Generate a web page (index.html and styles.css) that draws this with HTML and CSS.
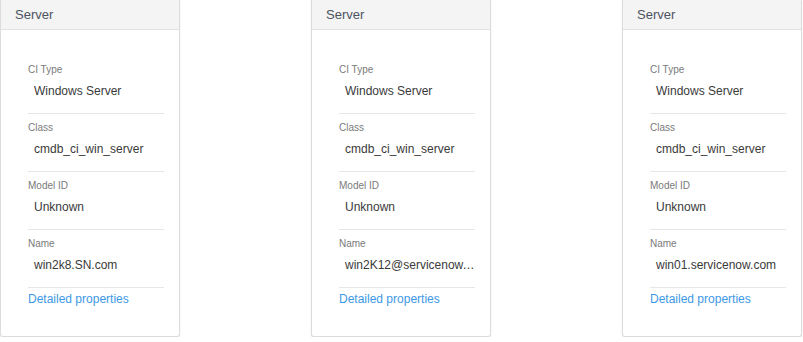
FILE: index.html
```html
<!DOCTYPE html>
<html lang="en">
    <head>
        <meta charset="UTF-8">
        <meta name="viewport" content="width=device-width, initial-scale=1.0">
        <title>CI Cards</title>
        <link rel="stylesheet" href="styles.css">
    </head>
    <body>

        <div class="card-row">
            <!-- Server 1 -->
            <div class="card">
                <div class="card-header">Server</div>
                <div class="card-body">
                    <div class="field">
                        <div class="field-label">CI Type</div>
                        <div class="field-value">Windows Server</div>
                    </div>
                    <div class="field">
                        <div class="field-label">Class</div>
                        <div class="field-value">cmdb_ci_win_server</div>
                    </div>
                    <div class="field">
                        <div class="field-label">Model ID</div>
                        <div class="field-value">Unknown</div>
                    </div>
                    <div class="field">
                        <div class="field-label">Name</div>
                        <div class="field-value">win2k8.SN.com</div>
                    </div>
                    <a class="details-link" href="#">Detailed properties</a>
                </div>
            </div>

            <!-- Server 2 -->
            <div class="card">
                <div class="card-header">Server</div>
                <div class="card-body">
                    <div class="field">
                        <div class="field-label">CI Type</div>
                        <div class="field-value">Windows Server</div>
                    </div>
                    <div class="field">
                        <div class="field-label">Class</div>
                        <div class="field-value">cmdb_ci_win_server</div>
                    </div>
                    <div class="field">
                        <div class="field-label">Model ID</div>
                        <div class="field-value">Unknown</div>
                    </div>
                    <div class="field">
                        <div class="field-label">Name</div>
                        <div class="field-value" title="win2K12@servicenow.com">win2K12@servicenow.com</div>
                    </div>
                    <a class="details-link" href="#">Detailed properties</a>
                </div>
            </div>

            <!-- Server 3 -->
            <div class="card">
                <div class="card-header">Server</div>
                <div class="card-body">
                    <div class="field">
                        <div class="field-label">CI Type</div>
                        <div class="field-value">Windows Server</div>
                    </div>
                    <div class="field">
                        <div class="field-label">Class</div>
                        <div class="field-value">cmdb_ci_win_server</div>
                    </div>
                    <div class="field">
                        <div class="field-label">Model ID</div>
                        <div class="field-value">Unknown</div>
                    </div>
                    <div class="field">
                        <div class="field-label">Name</div>
                        <div class="field-value">win01.servicenow.com</div>
                    </div>
                    <a class="details-link" href="#">Detailed properties</a>
                </div>
            </div>
        </div>

    </body>
</html>
```

FILE: styles.css
```css
/* Page */
body {
  margin: 0;
  background-color: #ffffff;
  font-family: "Liberation Sans", Arial, sans-serif;
}

/* Row of cards */
.card-row {
  display: flex;
  gap: 131px;
  align-items: flex-start;
}

/* Card Container */
.card {
  width: 180px;
  box-sizing: border-box;
  background-color: #ffffff;
  border: 1px solid #dcdcdc;
  border-top: none; /* top edge is outside the shot */
  border-radius: 0 0 3px 3px;
  box-shadow: 0px 1px 2px rgba(0, 0, 0, 0.08);
}

/* Header */
.card-header {
  height: 29px;
  line-height: 29px;
  padding: 0 14px;
  background-color: #f4f4f4;
  border-bottom: 1px solid #e2e2e2;
  color: #4b5360;
  font-size: 13px;
}

/* Body */
.card-body {
  padding: 26px 15px 29px 27px;
}

.field {
  padding: 7px 0 13px 0;
  border-bottom: 1px solid #e6e6e6;
}

.field-label {
  font-size: 10px;
  line-height: 14px;
  color: #7a7a7a;
  margin-bottom: 5px;
}

.field-value {
  font-size: 12px;
  line-height: 18px;
  color: #3a3a3a;
  padding-left: 6px;
  white-space: nowrap;
  overflow: hidden;
  text-overflow: ellipsis;
}

/* Link */
.details-link {
  display: block;
  padding-top: 3px;
  font-size: 12px;
  line-height: 16px;
  color: #3d98e6;
  text-decoration: none;
}
```
